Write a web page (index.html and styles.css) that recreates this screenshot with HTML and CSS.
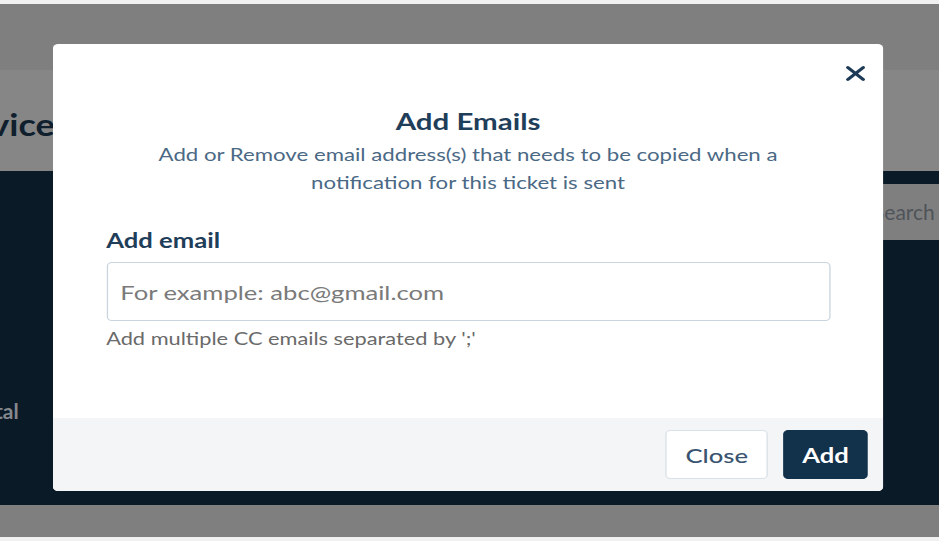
FILE: index.html
```html
<!DOCTYPE html>
<html>
<head>
<meta charset="utf-8">
<link rel="stylesheet" href="styles.css">
</head>
<body>
<div class="screen">
  <div class="header"></div>
  <div class="titlebar"><h1 class="page-title">Services</h1></div>
  <div class="content">
    <div class="toolbar"><div class="search">Search</div></div>
    <div class="total">Total</div>
  </div>
  <div class="bottombar"></div>
</div>

<div class="modal">
  <div class="modal-body">
    <button class="close-x" aria-label="Close">
      <svg width="17" height="17" viewBox="0 0 17 17"><path d="M2.5 2.5 L14.5 14.5 M14.5 2.5 L2.5 14.5" stroke="#1d3b57" stroke-width="2.8" stroke-linecap="round" fill="none"/></svg>
    </button>
    <h2 class="modal-title">Add Emails</h2>
    <p class="modal-sub">Add or Remove email address(s) that needs to be copied when a notification for this ticket is sent</p>
    <label class="field-label">Add email</label>
    <input class="field-input" type="text" placeholder="For example: abc@gmail.com">
    <div class="field-help">Add multiple CC emails separated by ';'</div>
  </div>
  <div class="modal-footer">
    <button class="btn btn-close">Close</button>
    <button class="btn btn-add">Add</button>
  </div>
</div>
</body>
</html>
```

FILE: styles.css
```css
* { box-sizing: border-box; }
html, body { margin: 0; padding: 0; }
body {
  background: #f0f0f0;
  font-family: Lato, "Open Sans", sans-serif;
  width: 939px;
  height: 541px;
  overflow: hidden;
  position: relative;
}
.screen {
  margin-top: 4px;
  height: 533px;
  display: flex;
  flex-direction: column;
}
.header { height: 66px; background: #7f7f7f; }
.titlebar {
  height: 101px;
  background: #868686;
  overflow: hidden;
  display: flex;
  align-items: center;
}
.page-title {
  margin: 0 0 0 -62px;
  font-size: 30px;
  font-weight: 700;
  color: #0f1f2d;
  padding-top: 6px;
  transform: scaleX(1.2);
  transform-origin: left center;
}
.content {
  height: 334px;
  background: #0b1a27;
  padding-top: 13px;
  overflow: hidden;
}
.toolbar { display: flex; justify-content: flex-end; }
.search {
  width: 100px;
  height: 56px;
  background: #7f7f7f;
  color: #4f545a;
  font-size: 21px;
  padding: 15px 0 0 5px;
  margin-right: -29px;
  white-space: nowrap;
}
.total {
  margin: 158px 0 0 -27px;
  font-size: 21px;
  font-weight: 700;
  color: #85898d;
}
.bottombar { height: 32px; background: #7f7f7f; }

/* the modal is laid out at its natural width and widened like the reference */
.modal {
  position: absolute;
  left: 53px;
  top: 44px;
  width: 648px;
  height: 447px;
  background: #fff;
  border-radius: 4px;
  overflow: hidden;
  display: flex;
  flex-direction: column;
  transform: scaleX(1.281);
  transform-origin: left top;
}
.modal-body {
  position: relative;
  flex: 1;
  padding: 62px 41.5px 0 41.5px;
}
.close-x {
  position: absolute;
  right: 13px;
  top: 21px;
  border: 0;
  background: none;
  padding: 0;
  line-height: 0;
}
.modal-title {
  margin: 0;
  text-align: center;
  font-size: 23px;
  font-weight: 700;
  color: #1f3e5a;
  line-height: 30px;
}
.modal-sub {
  margin: 5px auto 0;
  width: 500px;
  text-align: center;
  font-size: 17.35px;
  color: #4b6985;
  line-height: 28px;
}
.field-label {
  display: block;
  margin-top: 30px;
  font-size: 20px;
  font-weight: 700;
  color: #1f3e5a;
  line-height: 26px;
}
.field-input {
  display: block;
  margin-top: 9px;
  width: 100%;
  height: 59px;
  border: 1.5px solid #c9d4de;
  border-radius: 4px;
  padding: 0 10px;
  font-family: Lato, "Open Sans", sans-serif;
  font-size: 20px;
  color: #333;
  outline: none;
}
.field-input::placeholder { color: #7a7a7a; }
.field-help {
  margin-top: 7px;
  font-size: 17px;
  color: #6a6a6a;
}
.modal-footer {
  height: 73px;
  background: #f4f5f7;
  display: flex;
  justify-content: flex-end;
  align-items: center;
  gap: 11.7px;
  padding: 0 11.7px 0 0;
}
.btn {
  height: 49px;
  border-radius: 4px;
  font-family: Lato, "Open Sans", sans-serif;
  font-size: 20px;
  padding: 0;
}
.btn-close {
  width: 80px;
  background: #fff;
  border: 1.5px solid #d9e0e7;
  color: #3a5470;
  font-weight: 500;
}
.btn-add {
  width: 66.5px;
  background: #12314b;
  border: 1px solid #12314b;
  color: #fff;
  font-weight: 700;
}
```
